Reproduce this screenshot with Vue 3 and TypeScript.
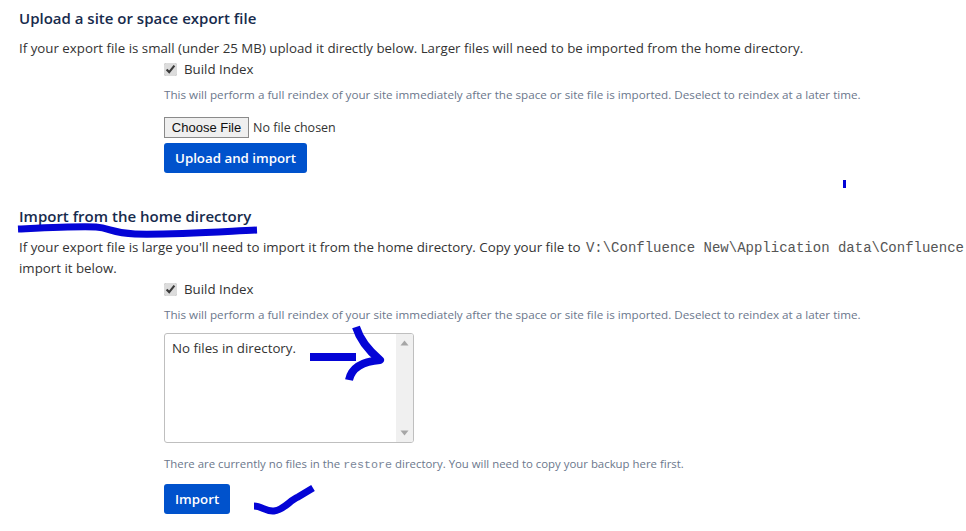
<template>
  <div class="page">
    <section class="block">
      <h2>Upload a site or space export file</h2>
      <p class="intro">If your export file is small (under 25 MB) upload it directly below. Larger files will need to be imported from the home directory.</p>
      <div class="form">
        <label class="check"><input type="checkbox" checked /> <span>Build Index</span></label>
        <div class="desc">{{ reindexNote }}</div>
        <input class="file" type="file" />
        <button class="primary upload" type="button">Upload and import</button>
      </div>
    </section>

    <section class="block second">
      <h2>Import from the home directory</h2>
      <p class="intro wide">If your export file is large you'll need to import it from the home directory. Copy your file to <code>V:\Confluence New\Application data\Confluence</code><br />import it below.</p>
      <div class="form">
        <label class="check"><input type="checkbox" checked /> <span>Build Index</span></label>
        <div class="desc">{{ reindexNote }}</div>
        <div class="listbox">
          <div class="listbox__text">No files in directory.</div>
          <div class="listbox__bar">
            <svg width="9" height="6" viewBox="0 0 9 6"><path d="M4.5 0.5 8.5 5.5H0.5Z" fill="#a6a6a6" /></svg>
            <svg width="9" height="6" viewBox="0 0 9 6"><path d="M0.5 0.5H8.5L4.5 5.5Z" fill="#a6a6a6" /></svg>
          </div>
        </div>
        <div class="desc hint">There are currently no files in the <code>restore</code> directory. You will need to copy your backup here first.</div>
        <button class="primary" type="button">Import</button>
      </div>
    </section>

    <!-- marker scribbled over the screenshot -->
    <svg class="scribble" width="966" height="531" viewBox="0 0 966 531" fill="none" stroke="#0404d6" stroke-linecap="butt" stroke-linejoin="round">
      <path d="M844.5 180V188" stroke-width="3" />
      <path d="M18 229C40 228 78 226 96 227C110 228 112 233 135 234C170 235 215 232 257 230" stroke-width="7" />
      <path d="M310 357H356" stroke-width="8" />
      <path d="M356 327C360 340 368 350 380 360C368 361 352 365 349 380" stroke-width="8" />
      <path d="M254 506C262 506 266 512 274 511C284 510 290 500 298 497C303 494 308 491 313 488" stroke-width="7" />
    </svg>
  </div>
</template>

<script setup lang="ts">
const reindexNote = "This will perform a full reindex of your site immediately after the space or site file is imported. Deselect to reindex at a later time."
</script>

<style>
html, body {
  margin: 0;
  background: #fff;
  overflow: hidden;
}
</style>

<style scoped>
.page {
  position: relative;
  width: 966px;
  height: 531px;
  overflow: hidden;
  box-sizing: border-box;
  padding: 8px 0 0 19px;
  font-family: "Open Sans", "Noto Sans", sans-serif;
  font-size: 13.3px;
  line-height: 21px;
  color: #333;
}

h2 {
  margin: 0;
  font-size: 15px;
  font-weight: 600;
  line-height: 20px;
  color: #172b4d;
}

.intro {
  margin: 10px 0 0;
  width: 960px;
}

.wide {
  white-space: nowrap;
}

code {
  font-family: "Liberation Mono", monospace;
  font-size: 14px;
  line-height: 1;
  margin-left: 2px;
  color: #555;
}

.form {
  display: flex;
  flex-direction: column;
  align-items: flex-start;
  padding-left: 145px;
}

.check {
  display: flex;
  align-items: center;
  gap: 7px;
  height: 21px;
}

.check input {
  margin: 0;
  width: 13px;
  height: 13px;
  accent-color: #dcdcdc;
}

.desc {
  margin-top: 4px;
  font-size: 11.67px;
  line-height: 21px;
  color: #6b778c;
  white-space: nowrap;
}

.file {
  margin-top: 12px;
  font-size: 12.5px;
  font-family: inherit;
  height: 21px;
  width: 300px;
}

.file::file-selector-button {
  height: 21px;
  width: 85px;
  margin-right: 4px;
  padding: 0;
  font-family: "Liberation Sans", sans-serif;
  font-size: 13px;
  color: #111;
  background: #efefef;
  border: 1px solid #8a8a8a;
  border-radius: 0;
}

.primary {
  height: 30px;
  padding: 0 11px;
  border: 0;
  border-radius: 3px;
  background: #0052cc;
  color: #fff;
  font: 600 13.3px/30px "Open Sans", "Noto Sans", sans-serif;
}

.upload {
  margin-top: 5px;
}

.second {
  margin-top: 33px;
}

.second .intro {
  margin-top: 11px;
}

.listbox {
  margin-top: 8px;
  display: flex;
  width: 250px;
  height: 110px;
  box-sizing: border-box;
  border: 1px solid #bfbfbf;
  border-radius: 3px;
  overflow: hidden;
}

.listbox__text {
  flex: 1;
  padding: 4px 7px;
}

.listbox__bar {
  width: 17px;
  background: #f0f0f0;
  display: flex;
  flex-direction: column;
  align-items: center;
  justify-content: space-between;
  padding: 6px 0;
}

.hint {
  margin-top: 10px;
  font-size: 11.4px;
}

.hint code {
  font-size: 11.67px;
  margin-left: 0;
  color: #7a8699;
}

.scribble {
  position: absolute;
  top: 0;
  left: 0;
  pointer-events: none;
}

.hint + .primary {
  margin-top: 10px;
}
</style>
